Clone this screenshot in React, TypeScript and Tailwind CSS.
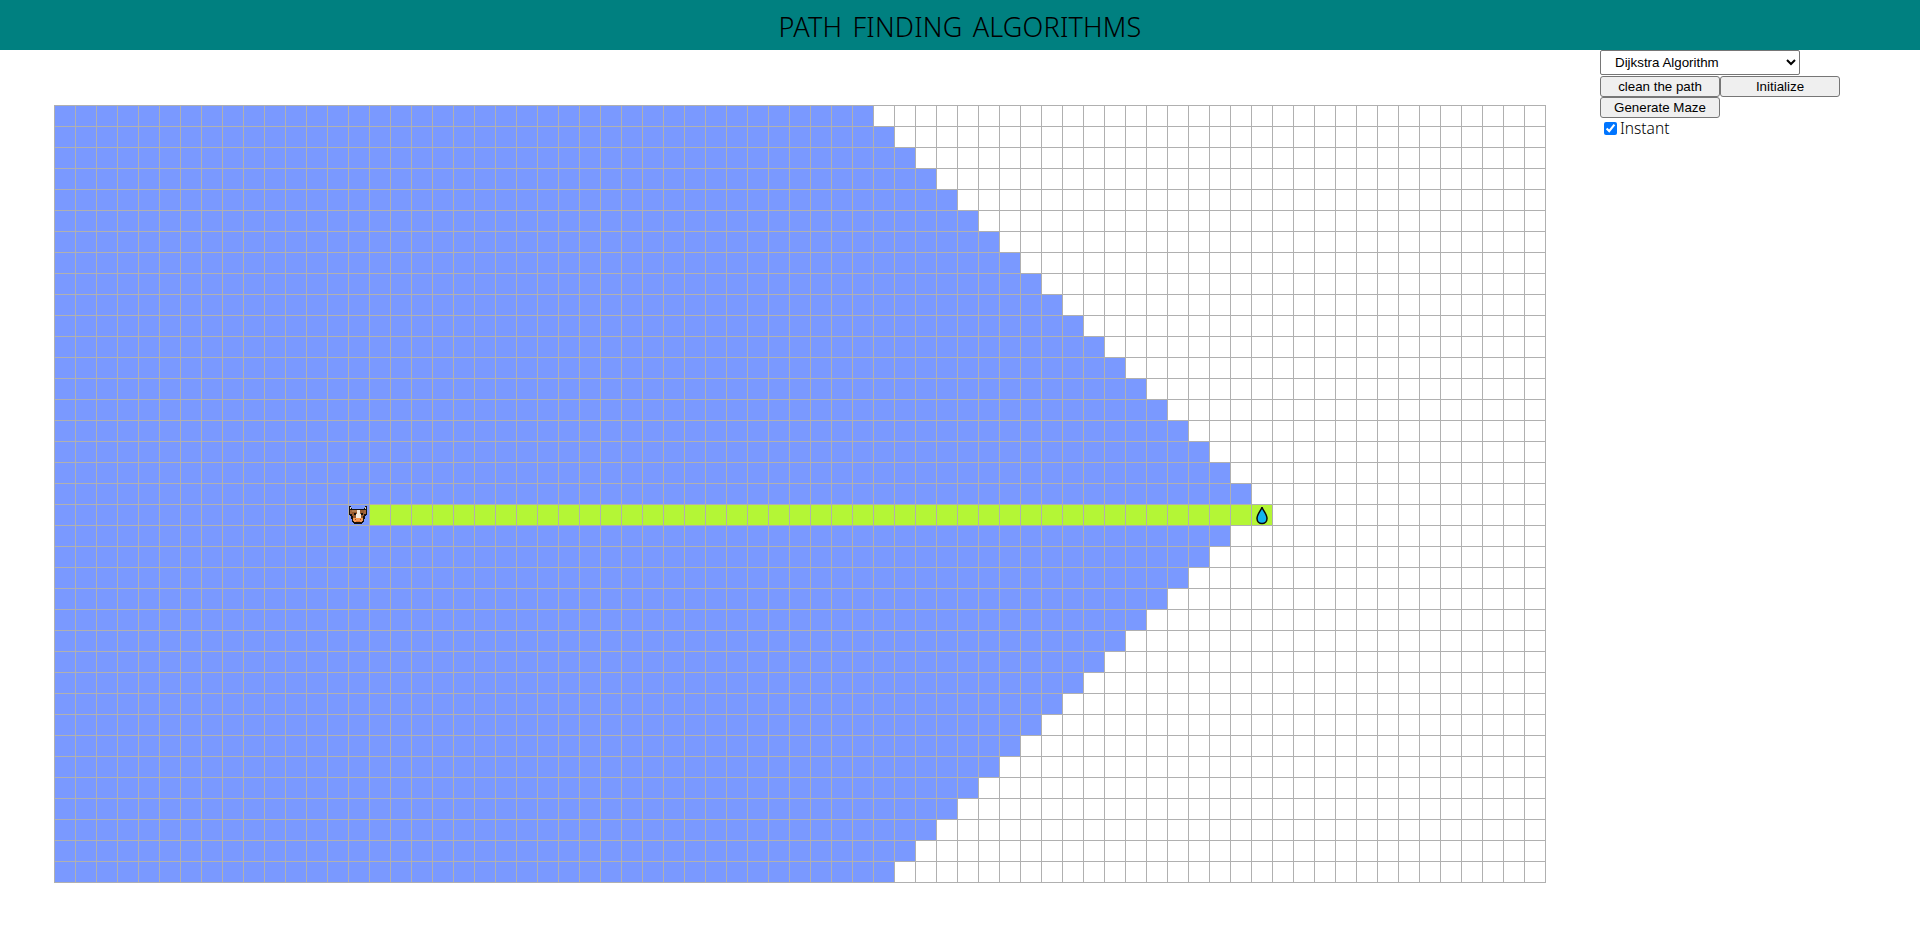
const ROWS = 37;
const COLS = 71;
const SR = 19;
const SC = 14;
const EC = 57;

function Cow() {
  return (
    <svg viewBox="0 0 20 20" shapeRendering="crispEdges" className="h-5 w-5">
      <path d="M0 1h2v2h1v1h12v-1h1v-2h2v9h-1v1h-1v3h-1v3h-1v1h-1v1h-8v-1h-1v-1h-1v-3h-1v-3h-1v-1h-1z" fill="#16110f" />
      <rect x="1" y="5" width="2" height="4" fill="#a5673a" />
      <rect x="15" y="5" width="2" height="4" fill="#a5673a" />
      <rect x="1" y="2" width="1" height="2" fill="#d8d2c4" />
      <rect x="16" y="2" width="1" height="2" fill="#d8d2c4" />
      <rect x="3" y="5" width="12" height="6" fill="#95592d" />
      <rect x="4" y="11" width="10" height="2" fill="#95592d" />
      <rect x="3" y="5" width="5" height="2" fill="#b07a4c" />
      <rect x="8" y="5" width="3" height="8" fill="#f4ece0" />
      <rect x="7" y="9" width="5" height="4" fill="#f4ece0" />
      <rect x="5" y="8" width="2" height="2" fill="#16110f" />
      <rect x="12" y="8" width="2" height="2" fill="#16110f" />
      <rect x="4" y="13" width="10" height="3" fill="#f59a55" />
      <rect x="5" y="16" width="8" height="1" fill="#f59a55" />
      <rect x="7" y="16" width="4" height="1" fill="#d9702e" />
      <rect x="6" y="14" width="1" height="1" fill="#a8481c" />
      <rect x="11" y="14" width="1" height="1" fill="#a8481c" />
    </svg>
  );
}

function Drop() {
  return (
    <svg viewBox="0 0 20 20" className="h-5 w-5">
      <path d="M10 2 C10.5 5 15 9 15 13.5 C15 16.5 12.8 18.5 10 18.5 C7.2 18.5 5 16.5 5 13.5 C5 9 9.5 5 10 2 Z" fill="#12b4f0" stroke="#0a0a0a" strokeWidth="1.5" />
    </svg>
  );
}

function cellColor(r: number, c: number) {
  if (r === SR) {
    if (c > SC && c <= EC) return "bg-[#b4f636]";
    return c <= SC ? "bg-[#7a99ff]" : "bg-white";
  }
  const limit = r < SR ? 43 : 42;
  return Math.abs(r - SR) + Math.abs(c - SC) <= limit || c < SC ? "bg-[#7a99ff]" : "bg-white";
}

export default function App() {
  const cells = [];
  for (let r = 0; r < ROWS; r++) {
    for (let c = 0; c < COLS; c++) {
      cells.push(
        <div key={`${r}-${c}`} className={`flex h-[21px] w-[21px] items-center justify-center border-r border-b border-[#b0b0b0] ${cellColor(r, c)}`}>
          {r === SR && c === SC && <Cow />}
          {r === SR && c === EC && <Drop />}
        </div>
      );
    }
  }
  return (
    <div className="h-[937px] overflow-hidden bg-white font-['Liberation_Sans',sans-serif] text-black">
      <header className="flex h-[50px] items-center justify-center bg-[#008080] pt-[5px] font-['Noto_Sans',sans-serif] text-[27px] font-light tracking-[0.2px] [word-spacing:3px]">
        PATH FINDING ALGORITHMS
      </header>
      <div className="flex">
        <main className="w-[1600px] pt-[55px] pl-[54px]">
          <div className="grid w-[1492px] grid-cols-[repeat(71,21px)] border-t border-l border-[#b0b0b0]">
            {cells}
          </div>
        </main>
        <aside className="flex flex-col items-start text-[13.33px]">
          <select defaultValue="d" className="h-[25px] w-[200px] rounded-[2px] border border-[#767676] bg-white pl-[10px]">
            <option value="d">Dijkstra Algorithm</option>
            <option value="a">A* Algorithm</option>
          </select>
          <div className="mt-px flex">
            <button className="h-[21px] w-[120px] rounded-[3px] border border-[#767676] bg-[#efefef]">clean the path</button>
            <button className="h-[21px] w-[120px] rounded-[3px] border border-[#767676] bg-[#efefef]">Initialize</button>
          </div>
          <button className="h-[21px] w-[120px] rounded-[3px] border border-[#767676] bg-[#efefef]">Generate Maze</button>
          <label className="flex h-[21px] items-center font-['Noto_Sans',sans-serif] text-[15.5px] font-light">
            <input type="checkbox" defaultChecked className="mr-[3px] mb-px ml-1 h-[13px] w-[13px]" />
            Instant
          </label>
        </aside>
      </div>
    </div>
  );
}
